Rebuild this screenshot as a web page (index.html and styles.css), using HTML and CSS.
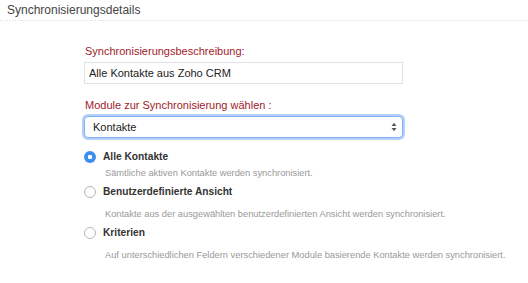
FILE: index.html
```
<!DOCTYPE html>
<html>
<head>
  <title>Synchronisierungsdetails</title>
  <link rel="stylesheet" href="styles.css">
</head>
<body>
  <div class="section-head">Synchronisierungsdetails</div>

  <form class="sync-form">
    <label class="field-label" for="desc">Synchronisierungsbeschreibung:</label>
    <input class="text-input" type="text" id="desc" value="Alle Kontakte aus Zoho CRM">

    <label class="field-label module-label" for="module">Module zur Synchronisierung wählen :</label>
    <div class="select-wrap">
      <select class="select-input" id="module">
        <option>Kontakte</option>
      </select>
      <svg class="select-arrows" width="6" height="10" viewBox="0 0 6 10">
        <path d="M0.5 4 L3 0.8 L5.5 4 Z M0.5 6 L3 9.2 L5.5 6 Z" fill="#555"/>
      </svg>
    </div>

    <div class="options">
      <label class="option">
        <span class="radio checked"></span>
        <span class="option-text">
          <span class="option-title">Alle Kontakte</span>
          <span class="option-desc">Sämtliche aktiven Kontakte werden synchronisiert.</span>
        </span>
      </label>
      <label class="option">
        <span class="radio"></span>
        <span class="option-text">
          <span class="option-title">Benutzerdefinierte Ansicht</span>
          <span class="option-desc">Kontakte aus der ausgewählten benutzerdefinierten Ansicht werden synchronisiert.</span>
        </span>
      </label>
      <label class="option">
        <span class="radio"></span>
        <span class="option-text">
          <span class="option-title">Kriterien</span>
          <span class="option-desc">Auf unterschiedlichen Feldern verschiedener Module basierende Kontakte werden synchronisiert.</span>
        </span>
      </label>
    </div>
  </form>
</body>
</html>
```
FILE: styles.css
```
body {
  margin: 0;
  background: #fff;
  font-family: "Liberation Sans", Arial, sans-serif;
  color: #333;
}
.section-head {
  font-size: 12px;
  line-height: 14px;
  padding: 3px 7px 3px;
  border-bottom: 1px dotted #e2e2e2;
  color: #444;
}
.sync-form {
  display: flex;
  flex-direction: column;
  width: 319px;
  margin-left: 84px;
  padding-top: 24px;
}
.field-label {
  font-size: 11px;
  line-height: 13px;
  color: #a01a2a;
  padding-left: 1px;
  margin-bottom: 4px;
}
.module-label {
  margin-top: 15px;
}
.text-input {
  box-sizing: border-box;
  height: 22px;
  margin: 0;
  padding: 0 4px;
  border: 1px solid #dfe3e8;
  font-family: inherit;
  font-size: 11px;
  color: #222;
  outline: none;
}
.select-wrap {
  position: relative;
}
.select-input {
  -webkit-appearance: none;
  appearance: none;
  box-sizing: border-box;
  width: 100%;
  height: 22px;
  margin: 0;
  padding: 0 8px;
  border: 1px solid #7fb2ee;
  border-radius: 4px;
  box-shadow: 0 0 0 2px rgba(120, 170, 240, 0.55);
  background: #fff;
  font-family: inherit;
  font-size: 11px;
  color: #222;
}
.select-arrows {
  position: absolute;
  right: 6px;
  top: 6px;
}
.options {
  display: flex;
  flex-direction: column;
  margin-top: 12px;
}
.option {
  display: flex;
  align-items: flex-start;
  margin-bottom: 6px;
}
.radio {
  box-sizing: border-box;
  flex: none;
  width: 12px;
  height: 12px;
  border-radius: 50%;
  border: 1px solid #b8b8b8;
  background: #fff;
  margin-top: 1px;
  margin-right: 7px;
}
.radio.checked {
  border: none;
  background: radial-gradient(circle, #fff 0 2px, #3d8ef2 2.5px);
}
.option-text {
  display: flex;
  flex-direction: column;
}
.option-title {
  font-size: 10.2px;
  line-height: 14px;
  font-weight: bold;
  color: #333;
}
.option-desc {
  font-size: 9.3px;
  line-height: 12px;
  color: #999;
  margin-top: 3px;
  padding-left: 2px;
  white-space: nowrap;
}
.option + .option .option-desc {
  margin-top: 9px;
}
```
